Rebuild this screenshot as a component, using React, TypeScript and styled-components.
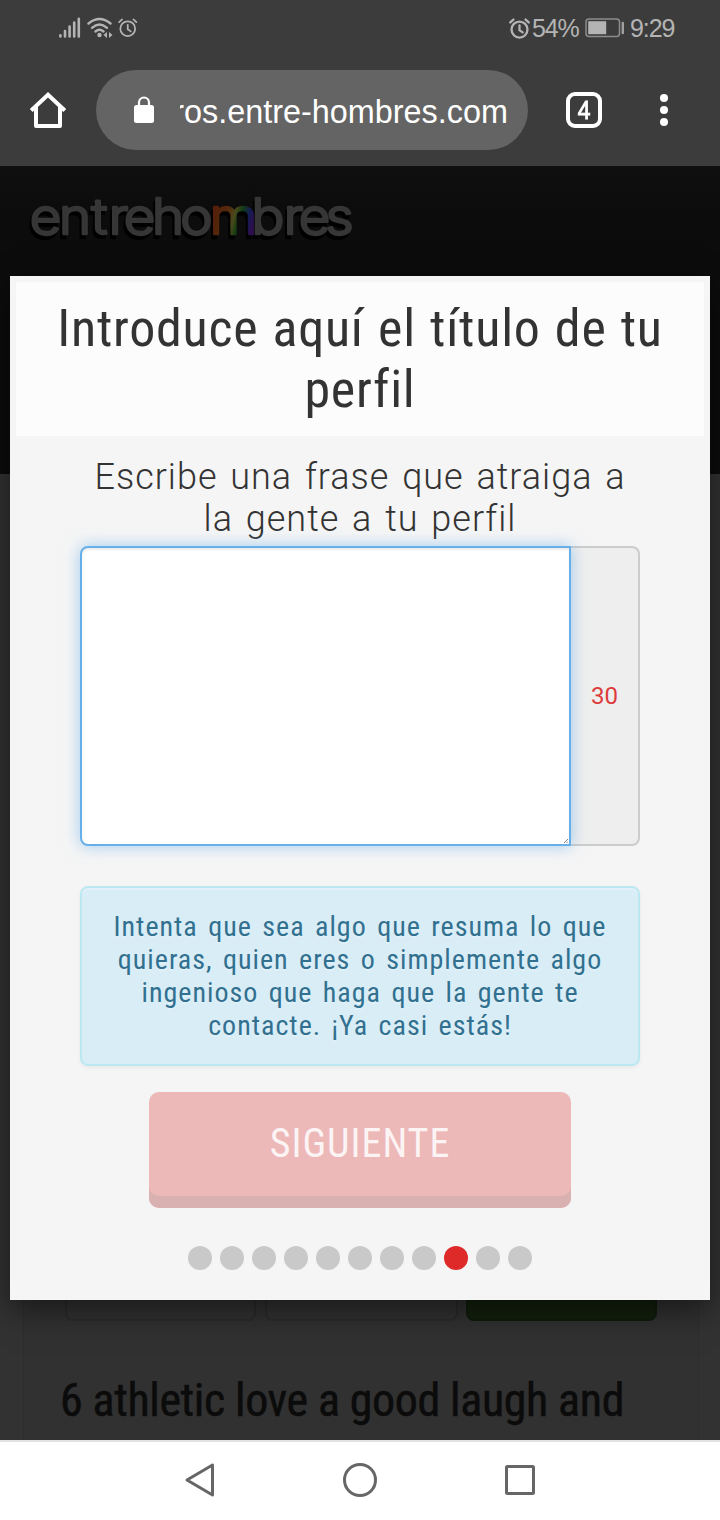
import React from "react";
import styled, { createGlobalStyle } from "styled-components";

const condensed = `"Roboto Condensed", Roboto, sans-serif`;

const GlobalStyle = createGlobalStyle`
  *, *::before, *::after { box-sizing: border-box; }
  body { margin: 0; background: #323232; font-family: Roboto, sans-serif; }
`;

const Phone = styled.div`
  width: 720px;
  height: 1520px;
  display: flex;
  flex-direction: column;
  overflow: hidden;
`;

const StatusBar = styled.header`
  height: 56px;
  flex: none;
  display: flex;
  align-items: center;
  justify-content: space-between;
  padding: 0 44px 0 58px;
  background: #3c3c3c;
  color: #b4b4b4;
`;

const StatusGroup = styled.div<{ $gap?: number }>`
  display: flex;
  align-items: center;
  gap: ${(p) => p.$gap ?? 0}px;
`;

const StatusText = styled.span<{ $width: number; $indent?: number }>`
  width: ${(p) => p.$width}px;
  padding: 0 0 1px ${(p) => p.$indent ?? 0}px;
  font: 25px/30px "Liberation Sans", Arial, sans-serif;
  white-space: nowrap;
  letter-spacing: -1.1px;
`;

const Toolbar = styled.nav`
  height: 110px;
  flex: none;
  display: flex;
  align-items: center;
  padding: 0 46px 2px 28px;
  background: #3c3c3c;
`;

const Omnibox = styled.div`
  width: 432px;
  height: 80px;
  margin: 0 38px 0 28px;
  padding: 0 20px 0 38px;
  display: flex;
  align-items: center;
  gap: 26px;
  border-radius: 40px;
  background: #646464;
`;

const UrlClip = styled.div`
  flex: 1;
  display: flex;
  justify-content: flex-end;
  overflow: hidden;
`;

const Url = styled.span`
  padding-top: 3px;
  font: 32.4px/44px "Liberation Sans", Arial, sans-serif;
  color: #fff;
  white-space: nowrap;
`;

const TabCount = styled.div`
  width: 36px;
  height: 36px;
  margin-right: 58px;
  display: grid;
  place-items: center;
  border: 4px solid #fff;
  border-radius: 9px;
  color: #fff;
  font: 26px/28px "Liberation Sans", Arial, sans-serif;
  -webkit-text-stroke: 0.9px #fff;

  span { transform: scaleX(0.88); }
`;

const Page = styled.main`
  position: relative;
  flex: 1;
  display: flex;
  flex-direction: column;
  background: #323232;
  overflow: hidden;
`;

const SiteHeader = styled.div`
  height: 308px;
  flex: none;
  padding: 14px 0 0 26px;
  background: linear-gradient(#101010, #0c0c0c 40px);
`;

const SiteCard = styled.section`
  flex: 1;
  margin: 0 21px 0 23px;
  padding: 600px 41px 0;
  border: solid #2d2d2d;
  border-width: 0 1px;
  background: #313131;
`;

const FilterRow = styled.div`
  display: grid;
  grid-template-columns: 191px 193px 191px;
  gap: 8.5px;
`;

const FilterBox = styled.div<{ $filled?: boolean }>`
  height: 247px;
  border: 2px solid ${(p) => (p.$filled ? "#0f1c0b" : "#2b2b2b")};
  border-radius: 8px;
  background: ${(p) => (p.$filled ? "#12200d" : "#323232")};
`;

const ResultTitle = styled.h2`
  margin: 49px 0 0 -5px;
  font: 400 46px/60px ${condensed};
  letter-spacing: -0.38px;
  color: #0b0b0b;
  white-space: nowrap;
  -webkit-text-stroke: 0.5px #0b0b0b;
`;

const Modal = styled.section`
  position: absolute;
  top: 110px;
  left: 10px;
  width: 700px;
  height: 1024px;
  padding: 6px;
  display: flex;
  flex-direction: column;
  align-items: center;
  background: #f5f5f5;
  box-shadow: 0 10px 30px rgba(0, 0, 0, 0.5);
`;

const Line = styled.span`
  display: block;
  white-space: nowrap;
`;

const ModalTitle = styled.h1`
  width: 688px;
  height: 154px;
  margin: 0;
  padding-top: 16px;
  background: #fcfcfc;
  color: #333;
  font: 400 52px/61px ${condensed};
  letter-spacing: 0.75px;
  word-spacing: 1.5px;
  text-align: center;
`;

const Prompt = styled.p`
  margin: 20px 0 6px;
  color: #333;
  font: 300 36px/42px Roboto, sans-serif;
  letter-spacing: 1px;
  word-spacing: 3px;
  text-align: center;
`;

const InputGroup = styled.div`
  width: 560px;
  height: 300px;
  display: flex;
`;

const Phrase = styled.textarea`
  position: relative;
  width: 491px;
  height: 300px;
  margin: 0;
  border: 2px solid #66afe9;
  border-radius: 8px 0 0 8px;
  outline: none;
  background: #fff;
  box-shadow: inset 0 2px 2px rgba(0, 0, 0, 0.075), 0 0 16px rgba(102, 175, 233, 0.6);
  resize: none;
`;

const InputWrap = styled.div`
  position: relative;
  width: 491px;
  height: 300px;

  svg {
    position: absolute;
    right: 3px;
    bottom: 3px;
  }
`;

const Counter = styled.span`
  flex: 1;
  display: grid;
  place-items: center;
  border: 2px solid #ccc;
  border-left: 0;
  border-radius: 0 8px 8px 0;
  background: #eee;
  color: #dd3c3c;
  font: 24px/24px Roboto, sans-serif;
`;

const Hint = styled.div`
  width: 560px;
  height: 180px;
  margin-top: 40px;
  padding-top: 22px;
  border: 2px solid #bce8f1;
  border-radius: 8px;
  background: #d9edf7;
  box-shadow: inset 0 2px 0 rgba(255, 255, 255, 0.25), 0 2px 4px rgba(0, 0, 0, 0.05);
  color: #31708f;
  font: 400 28px/33px ${condensed};
  letter-spacing: 1px;
  word-spacing: 3px;
  text-align: center;
  text-shadow: 0 2px 0 rgba(255, 255, 255, 0.2);
`;

const NextButton = styled.button`
  width: 422px;
  height: 116px;
  margin: 26px 0 0;
  padding: 0 0 12px;
  border: 0;
  border-radius: 10px;
  background: #edb8b8;
  box-shadow: inset 0 -12px 0 #dab1b1;
  color: #fcf4f4;
  font: 400 40px/50px ${condensed};
  letter-spacing: 1px;
`;

const Steps = styled.div`
  margin-top: 38px;
  display: flex;
  gap: 8px;
`;

const Step = styled.i<{ $active: boolean }>`
  width: 24px;
  height: 24px;
  border-radius: 50%;
  background: ${(p) => (p.$active ? "#df2a2a" : "#c9c9c9")};
`;

const SystemNav = styled.footer`
  height: 80px;
  flex: none;
  border-top: 2px solid #e2e2e2;
  padding-bottom: 2px;
  background: #fff;
  display: flex;
  justify-content: center;
  align-items: center;
  gap: 120px;
`;

const LogoArt = styled.svg`
  display: block;
  filter: drop-shadow(-1.5px 4px 0.5px #000);
`;

const Signal = () => (
  <svg width="24" height="22" viewBox="0 0 24 22" stroke="#b4b4b4" strokeWidth="2.6" strokeLinecap="round">
    <path d="M2.4 19.500v-1.2M7 19.500v-5.5M11.6 19.500V9.500M16.200 19.500V5.500M20.800 19.500V1.700" />
  </svg>
);

const Wifi = () => (
  <svg width="27" height="22" viewBox="0 0 27 22" fill="none" stroke="#b4b4b4" strokeWidth="2.4" strokeLinecap="round">
    <path d="M1.500 6.500Q12.500 -2.500 23.500 6.500M5 10.800Q12.500 4.200 20 10.800M8.500 14.500Q12.500 11 16.500 14.500" />
    <circle cx="12.500" cy="18" r="2.200" fill="#b4b4b4" stroke="none" />
    <path d="M20 15v6l-3.500-3zM22 15v6l3.500-3z" fill="#b4b4b4" stroke="none" />
  </svg>
);

const Alarm = ({ size, stroke }: { size: number; stroke: number }) => (
  <svg width={size} height={size} viewBox="0 0 20 20" fill="none" stroke="#b4b4b4" strokeWidth={stroke} strokeLinecap="round">
    <circle cx="10" cy="11" r="7.600" />
    <path d="M10 7v4.500l3 2.200M1.200 4.200L4.200 1.500M18.800 4.200L15.800 1.500" />
  </svg>
);

const Battery = () => (
  <svg width="46" height="20" viewBox="-1 0 46 20">
    <rect x="1" y="1" width="33.500" height="17.500" rx="3" fill="none" stroke="#8c8c8c" strokeWidth="1.500" />
    <rect x="3.200" y="3.200" width="18" height="13" fill="#b4b4b4" />
    <path d="M37.800 5v10" stroke="#a0a0a0" strokeWidth="2.400" strokeLinecap="round" />
  </svg>
);

const Home = () => (
  <svg width="40" height="40" viewBox="0 0 40 40" fill="none" stroke="#fff" strokeWidth="4" strokeLinejoin="round">
    <path d="M3.200 20.500L20 4.700L36.800 20.500" strokeLinejoin="miter" />
    <path d="M8 17v19h24V17" />
  </svg>
);

const Lock = () => (
  <svg width="20" height="28" viewBox="0 0 20 28">
    <rect x="0" y="9" width="20" height="18" rx="2.500" fill="#fff" />
    <path d="M5 10V6.500a5 5 0 0 1 10 0V10" fill="none" stroke="#fff" strokeWidth="2.200" />
  </svg>
);

const Kebab = () => (
  <svg width="8" height="34" viewBox="0 0 8 34" fill="#fff">
    <circle cx="4" cy="5" r="4" />
    <circle cx="4" cy="17" r="4" />
    <circle cx="4" cy="29" r="4" />
  </svg>
);

/* Letter centres of the wordmark; the glyphs are stretched a little to look round. */
const letterStretch = 1.1;
const letterCentres = [45.5, 75, 99.5, 118.5, 139.5, 168, 196.5, 233.5, 268, 293.5, 314.5, 339.5]
  .map((x) => (x / letterStretch).toFixed(2))
  .join(" ");

const Logo = () => (
  <LogoArt width="340" height="70" viewBox="26 180 340 70">
    <defs>
      <linearGradient id="rainbow" gradientUnits="userSpaceOnUse" x1="195" y1="215" x2="230" y2="224">
        <stop offset="0" stopColor="#54200a" />
        <stop offset="0.300" stopColor="#54290c" />
        <stop offset="0.480" stopColor="#4a4a1c" />
        <stop offset="0.640" stopColor="#123c12" />
        <stop offset="0.840" stopColor="#141c54" />
        <stop offset="1" stopColor="#2c0e4c" />
      </linearGradient>
    </defs>
    <text
      transform={`scale(${letterStretch} 1)`}
      x={letterCentres}
      y="234"
      textAnchor="middle"
      fontFamily="Inter, sans-serif"
      fontSize="49.500"
      fontWeight="300"
      fill="#363636"
      stroke="#363636"
      strokeWidth="2.400"
      strokeLinejoin="round"
    >entreho<tspan fill="url(#rainbow)" stroke="url(#rainbow)">m</tspan>bres</text>
  </LogoArt>
);

const ResizeGrip = () => (
  <svg width="4" height="4" viewBox="0 0 4 4" stroke="#666" strokeWidth="0.8">
    <path d="M0 4L4 0M2.500 4L4 2.500" />
  </svg>
);

const NavIcon = ({ children }: { children: React.ReactNode }) => (
  <svg width="40" height="40" viewBox="0 0 40 40" fill="none" stroke="#666" strokeWidth="3" strokeLinejoin="round">
    {children}
  </svg>
);

const hintLines = [
  "Intenta que sea algo que resuma lo que",
  "quieras, quien eres o simplemente algo",
  "ingenioso que haga que la gente te",
  "contacte. ¡Ya casi estás!",
];

export default function App() {
  return (
    <Phone>
      <GlobalStyle />
      <StatusBar>
        <StatusGroup $gap={4.5}>
          <Signal />
          <Wifi />
          <Alarm size={19.5} stroke={1.8} />
        </StatusGroup>
        <StatusGroup>
          <Alarm size={21} stroke={2.2} />
          <StatusText $width={54} $indent={2}>54%</StatusText>
          <Battery />
          <StatusText $width={46}>9:29</StatusText>
        </StatusGroup>
      </StatusBar>
      <Toolbar>
        <Home />
        <Omnibox>
          <Lock />
          <UrlClip><Url>ros.entre-hombres.com</Url></UrlClip>
        </Omnibox>
        <TabCount><span>4</span></TabCount>
        <Kebab />
      </Toolbar>
      <Page>
        <SiteHeader><Logo /></SiteHeader>
        <SiteCard>
          <FilterRow>
            <FilterBox />
            <FilterBox />
            <FilterBox $filled />
          </FilterRow>
          <ResultTitle>6 athletic love a good laugh and</ResultTitle>
        </SiteCard>
        <Modal>
          <ModalTitle>
            <Line>Introduce aquí el título de tu</Line>
            <Line>perfil</Line>
          </ModalTitle>
          <Prompt>
            <Line>Escribe una frase que atraiga a</Line>
            <Line>la gente a tu perfil</Line>
          </Prompt>
          <InputGroup>
            <InputWrap>
              <Phrase />
              <ResizeGrip />
            </InputWrap>
            <Counter>30</Counter>
          </InputGroup>
          <Hint>
            {hintLines.map((line) => <Line key={line}>{line}</Line>)}
          </Hint>
          <NextButton>SIGUIENTE</NextButton>
          <Steps>
            {Array.from({ length: 11 }, (_, i) => <Step key={i} $active={i === 8} />)}
          </Steps>
        </Modal>
      </Page>
      <SystemNav>
        <NavIcon><path d="M32.500 5v30L7 20z" /></NavIcon>
        <NavIcon><circle cx="20" cy="20" r="15.500" /></NavIcon>
        <NavIcon><rect x="6.500" y="6.500" width="27" height="27" rx="1" /></NavIcon>
      </SystemNav>
    </Phone>
  );
}
